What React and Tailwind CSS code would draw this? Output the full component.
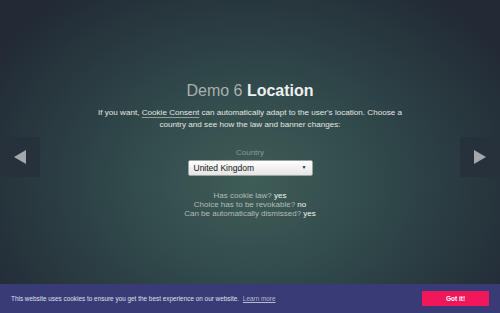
import React from 'react';

export default function App() {
    return (
        <div className="relative w-[500px] h-[313px] overflow-hidden bg-[radial-gradient(ellipse_60%_75%_at_50%_58%,#3f5d57_0%,#30484a_45%,#222a35_100%)]" style={{ fontFamily: '"Liberation Sans", Arial, sans-serif' }}>
            <div className="flex flex-col items-center pt-[80px] text-center">
                <h1 className="text-[16px] leading-[21px] text-[#a9b0ad]">
                    Demo 6 <span className="font-bold text-[#eef0ef]">Location</span>
                </h1>
                <p className="mt-[6px] w-[314px] text-[8.1px] leading-[12px] text-[#e3e7e5]">
                    If you want, <span className="underline decoration-[#8fa09b] underline-offset-[2px]">Cookie Consent</span> can automatically adapt to the user's location. Choose a country and see how the law and banner changes:
                </p>
                <div className="mt-[17px] text-[8px] leading-[10px] text-[#8d9c97]">Country</div>
                <div className="mt-[2px] flex h-[16px] w-[125px] items-center justify-between rounded-[2px] border border-[#9aa39f] bg-[linear-gradient(#ffffff,#e4e4e4)] px-[5px]">
                    <span className="text-[8.5px] text-[#111]">United Kingdom</span>
                    <span className="text-[5px] text-[#222]">▼</span>
                </div>
                <div className="mt-[15px] text-[8px] leading-[9px] text-[#b3bcb8]">
                    <div>Has cookie law? <span className="text-[#f4f6f5]">yes</span></div>
                    <div>Choice has to be revokable? <span className="text-[#f4f6f5]">no</span></div>
                    <div>Can be automatically dismissed? <span className="text-[#f4f6f5]">yes</span></div>
                </div>
            </div>

            <div className="absolute left-0 top-[137px] flex h-[40px] w-[40px] items-center justify-center bg-[#26313b]">
                <svg width="12" height="14" viewBox="0 0 12 14"><path d="M12 0 L0 7 L12 14 Z" fill="#a4a8ab" /></svg>
            </div>
            <div className="absolute right-0 top-[137px] flex h-[40px] w-[40px] items-center justify-center bg-[#26313b]">
                <svg width="12" height="14" viewBox="0 0 12 14"><path d="M0 0 L12 7 L0 14 Z" fill="#a4a8ab" /></svg>
            </div>

            <div className="absolute bottom-0 left-0 flex h-[29px] w-full items-center justify-between bg-[#383b75] pl-[11px] pr-[11px]">
                <div className="text-[6.4px] text-[#dfe0ee]">
                    This website uses cookies to ensure you get the best experience on our website.{' '}
                    <span className="ml-[2px] underline text-[#b8b9d2]">Learn more</span>
                </div>
                <div className="flex h-[15px] w-[67px] items-center justify-center bg-[#f1175b] text-[6.5px] font-bold text-white">Got it!</div>
            </div>
        </div>
    );
}
